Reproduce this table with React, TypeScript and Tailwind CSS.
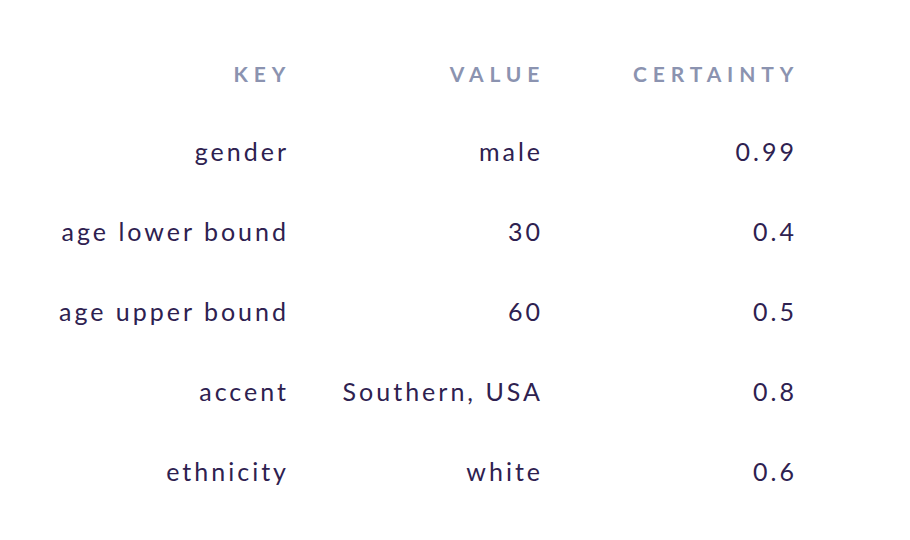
import React from "react";

const rows: [string, string, string][] = [
  ["gender", "male", "0.99"],
  ["age lower bound", "30", "0.4"],
  ["age upper bound", "60", "0.5"],
  ["accent", "Southern, USA", "0.8"],
  ["ethnicity", "white", "0.6"],
];

export default function App() {
  return (
    <div className="w-[910px] h-[540px] bg-white" style={{ fontFamily: "Lato, 'Noto Sans', sans-serif" }}>
      <div className="pt-[35px] pl-[32px]">
        <div className="grid grid-cols-[254px_254px_254px]">
          {["KEY", "VALUE", "CERTAINTY"].map((h) => (
            <div key={h} className="h-[77px] flex items-center justify-end">
              <span className="text-[21px] font-bold tracking-[0.28em] mr-[-0.25em] text-[#8b93b0]">{h}</span>
            </div>
          ))}
          {rows.map((r) =>
            r.map((c, i) => (
              <div key={r[0] + i} className="h-[80px] flex items-center justify-end">
                <span className="text-[25px] tracking-[0.12em] mr-[-0.12em] text-[#2e2150]">{c}</span>
              </div>
            ))
          )}
        </div>
      </div>
    </div>
  );
}
